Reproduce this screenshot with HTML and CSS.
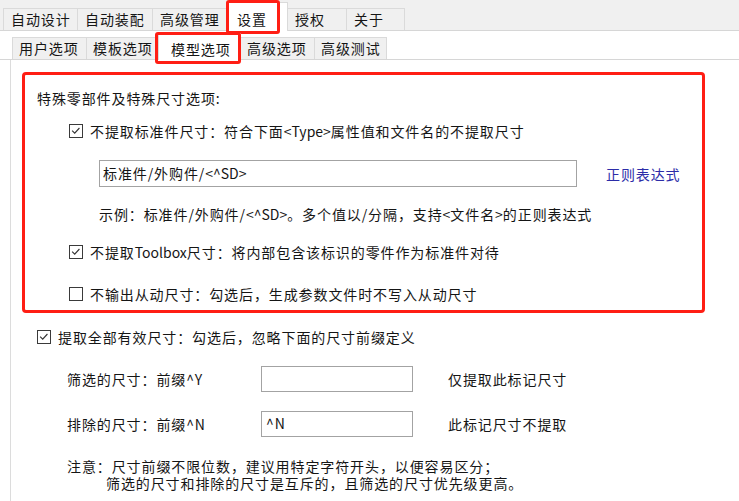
FILE: index.html
```html
<!DOCTYPE html>
<html lang="zh-CN">
<head>
<meta charset="utf-8">
<title>设置 - 模型选项</title>
<link rel="stylesheet" href="styles.css">
</head>
<body>
<div class="topbar">
  <div class="tab w74">自动设计</div>
  <div class="tab w75">自动装配</div>
  <div class="tab w75">高级管理</div>
  <div class="tab sel top-sel">设置</div>
  <div class="tab w59">授权</div>
  <div class="tab w58">关于</div>
</div>
<div class="subbar">
  <div class="stab s74">用户选项</div>
  <div class="stab s71">模板选项</div>
  <div class="stab sel sub-sel">模型选项</div>
  <div class="stab s74">高级选项</div>
  <div class="stab s72">高级测试</div>
</div>
<div class="panel">
  <div class="redbox">
    <div class="line">特殊零部件及特殊尺寸选项:</div>
    <div class="cbrow r1">
      <span class="cb checked"><svg viewBox="0 0 14 14" width="12" height="12"><path d="M2.5 6.5 L5.5 9.5 L11 3.5" fill="none" stroke="#333" stroke-width="1.3"/></svg></span>
      <span>不提取标准件尺寸：符合下面<span class="lat">&lt;Type&gt;</span>属性值和文件名的不提取尺寸</span>
    </div>
    <div class="inrow">
      <div class="field wide">标准件/外购件/<span class="lat">&lt;^SD&gt;</span></div>
      <span class="link">正则表达式</span>
    </div>
    <div class="line example">示例：标准件/外购件/<span class="lat">&lt;^SD&gt;</span>。多个值以/分隔，支持<span class="lat">&lt;</span>文件名<span class="lat">&gt;</span>的正则表达式</div>
    <div class="cbrow r2">
      <span class="cb checked"><svg viewBox="0 0 14 14" width="12" height="12"><path d="M2.5 6.5 L5.5 9.5 L11 3.5" fill="none" stroke="#333" stroke-width="1.3"/></svg></span>
      <span>不提取<span class="lat">Toolbox</span>尺寸：将内部包含该标识的零件作为标准件对待</span>
    </div>
    <div class="cbrow r3">
      <span class="cb"></span>
      <span>不输出从动尺寸：勾选后，生成参数文件时不写入从动尺寸</span>
    </div>
  </div>
  <div class="cbrow all">
    <span class="cb checked"><svg viewBox="0 0 14 14" width="12" height="12"><path d="M2.5 6.5 L5.5 9.5 L11 3.5" fill="none" stroke="#333" stroke-width="1.3"/></svg></span>
    <span>提取全部有效尺寸：勾选后，忽略下面的尺寸前缀定义</span>
  </div>
  <div class="frow">
    <span class="flabel">筛选的尺寸：前缀^Y</span>
    <div class="field small"></div>
    <span class="fnote">仅提取此标记尺寸</span>
  </div>
  <div class="frow">
    <span class="flabel">排除的尺寸：前缀^N</span>
    <div class="field small">^N</div>
    <span class="fnote">此标记尺寸不提取</span>
  </div>
  <div class="note">
    <div class="note1">注意：尺寸前缀不限位数，建议用特定字符开头，以便容易区分；</div>
    <div class="note2">筛选的尺寸和排除的尺寸是互斥的，且筛选的尺寸优先级更高。</div>
  </div>
</div>
</body>
</html>
```
FILE: styles.css
```css
html, body {
  margin: 0;
  padding: 0;
}
body {
  width: 739px;
  height: 501px;
  overflow: hidden;
  background: #fff;
  color: #151515;
  font-family: "Noto Sans CJK SC", "Noto Sans", sans-serif;
  font-size: 14px;
  letter-spacing: 0.9px;
}
.lat { letter-spacing: 0; }

/* top tabs */
.topbar {
  height: 31px;
  box-sizing: border-box;
  background: #f0f0f0;
  border-bottom: 1px solid #d6d6d6;
  display: flex;
  align-items: flex-end;
  padding-left: 3px;
}
.tab {
  height: 22px;
  box-sizing: border-box;
  border: 1px solid #dadada;
  border-bottom: 0;
  margin-right: -1px;
  padding-left: 7px;
  line-height: 20px;
  background: #f0f0f0;
  white-space: nowrap;
}
.w74 { width: 75px; }
.w75 { width: 76px; }
.w59 { width: 60px; }
.w58 { width: 59px; }
.tab.top-sel {
  width: 61px;
  height: 29px;
  margin-bottom: -1px;
  padding-left: 9px;
  padding-top: 6px;
  background: #fff;
  position: relative;
  z-index: 2;
}
.top-sel::after {
  content: "";
  position: absolute;
  left: -2px;
  top: -3px;
  width: 54px;
  height: 34px;
  box-sizing: border-box;
  border: 3px solid #ff1e14;
  border-radius: 3px;
}

/* sub tabs */
.subbar {
  height: 29px;
  box-sizing: border-box;
  border-bottom: 1px solid #d6d6d6;
  display: flex;
  align-items: flex-end;
  padding-left: 12px;
}
.stab {
  height: 22px;
  box-sizing: border-box;
  border: 1px solid #dadada;
  border-bottom: 0;
  margin-right: -1px;
  padding-left: 6px;
  line-height: 20px;
  background: #f0f0f0;
  white-space: nowrap;
  overflow: hidden;
}
.s74 { width: 75px; }
.s71 { width: 73px; }
.s72 { width: 73px; }
.stab.sub-sel {
  width: 83px;
  height: 27px;
  margin-bottom: -1px;
  padding-left: 12px;
  padding-top: 5px;
  background: #fff;
  position: relative;
  z-index: 2;
  overflow: visible;
}
.sub-sel::after {
  content: "";
  position: absolute;
  left: -4px;
  top: -2px;
  width: 86px;
  height: 32px;
  box-sizing: border-box;
  border: 3px solid #ff1e14;
  border-radius: 3px;
}

/* panel */
.panel {
  margin-left: 10px;
  border-left: 1px solid #dcdcdc;
  padding: 12px 0 0 11px;
  height: 441px;
  box-sizing: border-box;
}
.redbox {
  width: 683px;
  box-sizing: border-box;
  border: 3px solid #ff1e14;
  border-radius: 4px;
  padding: 13px 0 6px 12px;
}
.line {
  line-height: 20px;
  white-space: nowrap;
}
.cbrow {
  display: flex;
  align-items: center;
  height: 20px;
  white-space: nowrap;
}
.cb {
  width: 14px;
  height: 14px;
  box-sizing: border-box;
  border: 1px solid #3a3a3a;
  background: #fff;
  margin-right: 7px;
  display: flex;
  align-items: center;
  justify-content: center;
  flex: none;
}
.cb svg { display: block; }
.r1 { margin: 13px 0 0 32px; }
.r2 { margin: 18px 0 0 32px; }
.r3 { margin: 22px 0 0 32px; }
.inrow {
  display: flex;
  align-items: center;
  margin: 19px 0 0 62px;
}
.field {
  height: 27px;
  box-sizing: border-box;
  border: 1px solid #a3a3a3;
  background: #fff;
  padding-left: 3px;
  line-height: 24px;
  white-space: nowrap;
}
.field.wide { width: 478px; }
.link {
  margin-left: 29px;
  color: #2c2ca8;
}
.example { margin: 17px 0 0 62px; }

.all { margin: 14px 0 0 15px; }
.frow {
  display: flex;
  align-items: center;
  margin: 19px 0 0 45px;
  white-space: nowrap;
}
.flabel { width: 194px; }
.field.small { width: 152px; height: 26px; padding-left: 4px; line-height: 22px; }
.fnote { margin-left: 35px; }
.note {
  margin: 21px 0 0 45px;
  white-space: nowrap;
}
.note1, .note2 {
  height: 17px;
  line-height: 17px;
}
.note2 { padding-left: 39px; }
```
